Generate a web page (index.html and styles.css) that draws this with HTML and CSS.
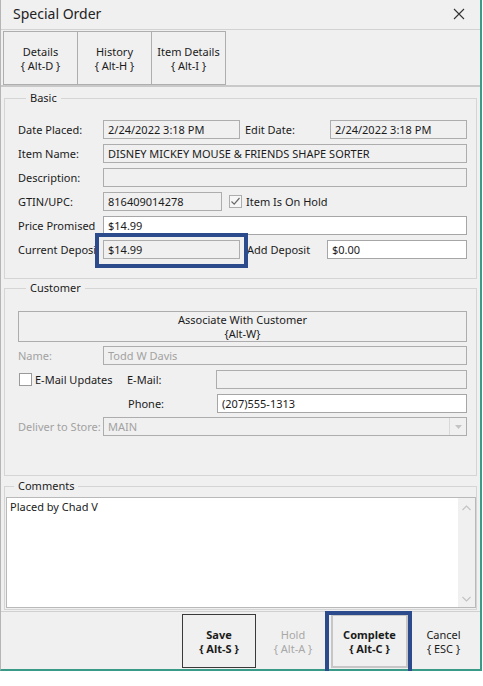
FILE: index.html
```html
<!DOCTYPE html>
<html>
<head>
<meta charset="utf-8">
<link rel="stylesheet" href="styles.css">
</head>
<body>
<div class="window">
  <div class="titlebar">
    <span class="title">Special Order</span>
    <svg class="close" width="12" height="12" viewBox="0 0 12 12"><path d="M1 1 L11 11 M11 1 L1 11" stroke="#333" stroke-width="1.1" fill="none"/></svg>
  </div>
  <div class="toolbar">
    <div class="tab"><span>Details</span><span>{ Alt-D }</span></div>
    <div class="tab"><span>History</span><span>{ Alt-H }</span></div>
    <div class="tab"><span>Item Details</span><span>{ Alt-I }</span></div>
  </div>
  <div class="content">
    <fieldset class="group basic">
      <legend>Basic</legend>
      <div class="row">
        <span class="lbl">Date Placed:</span>
        <span class="field ro w137">2/24/2022 3:18 PM</span>
        <span class="lbl lbl2">Edit Date:</span>
        <span class="field ro grow">2/24/2022 3:18 PM</span>
      </div>
      <div class="row">
        <span class="lbl">Item Name:</span>
        <span class="field ro grow">DISNEY MICKEY MOUSE &amp; FRIENDS SHAPE SORTER</span>
      </div>
      <div class="row">
        <span class="lbl">Description:</span>
        <span class="field ro grow"></span>
      </div>
      <div class="row">
        <span class="lbl">GTIN/UPC:</span>
        <span class="field ro w119">816409014278</span>
        <span class="check checked"><svg width="11" height="11" viewBox="0 0 11 11"><path d="M1.5 5.5 L4.2 8.2 L9.5 2" stroke="#6a6a6a" stroke-width="1.2" fill="none"/></svg></span>
        <span class="checklbl">Item Is On Hold</span>
      </div>
      <div class="row">
        <span class="lbl">Price Promised</span>
        <span class="field edit grow">$14.99</span>
      </div>
      <div class="row">
        <span class="lbl">Current Deposi</span>
        <span class="field ro w137 hl-wrap">$14.99<span class="highlight hl-deposit"></span></span>
        <span class="lbl lbl3">Add Deposit</span>
        <span class="field edit grow">$0.00</span>
      </div>
    </fieldset>

    <fieldset class="group customer">
      <legend>Customer</legend>
      <div class="assoc"><span>Associate With Customer</span><span>{Alt-W}</span></div>
      <div class="row r-name">
        <span class="lbl dis">Name:</span>
        <span class="field ro grow dis">Todd W Davis</span>
      </div>
      <div class="row r-mail">
        <span class="check"></span>
        <span class="checklbl mailupd">E-Mail Updates</span>
        <span class="lbl lbl-mail">E-Mail:</span>
        <span class="field ro grow"></span>
      </div>
      <div class="row r-phone">
        <span class="lbl lbl-phone">Phone:</span>
        <span class="field edit grow">(207)555-1313</span>
      </div>
      <div class="row r-store">
        <span class="lbl dis">Deliver to Store:</span>
        <span class="field ro grow dis combo">MAIN<span class="drop"><svg width="7" height="4" viewBox="0 0 7 4"><path d="M0 0 L7 0 L3.5 4 Z" fill="#c4c4c4"/></svg></span></span>
      </div>
    </fieldset>

    <fieldset class="group comments">
      <legend>Comments</legend>
      <div class="memo">
        <div class="memo-text">Placed by Chad V</div>
        <div class="scroll">
          <svg width="9" height="6" viewBox="0 0 9 6"><path d="M0.5 5 L4.5 1 L8.5 5" stroke="#c2c2c2" stroke-width="1.1" fill="none"/></svg>
          <svg width="9" height="6" viewBox="0 0 9 6"><path d="M0.5 1 L4.5 5 L8.5 1" stroke="#c2c2c2" stroke-width="1.1" fill="none"/></svg>
        </div>
      </div>
    </fieldset>
  </div>
  <div class="footer">
    <div class="btn save"><b>Save</b><b>{ Alt-S }</b></div>
    <div class="btn hold"><span>Hold</span><span>{ Alt-A }</span></div>
    <div class="btn complete"><b>Complete</b><b>{ Alt-C }</b><span class="highlight hl-complete"></span></div>
    <div class="btn cancel"><span>Cancel</span><span>{ ESC }</span></div>
  </div>
</div>
</body>
</html>
```

FILE: styles.css
```css
* { box-sizing: border-box; }
html, body { margin: 0; padding: 0; background: #ffffff; }
body {
  font-family: "Noto Sans", "Open Sans", sans-serif;
  font-size: 11px;
  color: #1b1b1b;
}
.window {
  width: 482px;
  height: 671px;
  background: #f0f0f0;
  border-left: 1px solid #b5b5b5;
  border-right: 2px solid #3a9a88;
  border-bottom: 2px solid #3a9a88;
  display: flex;
  flex-direction: column;
}
.titlebar {
  height: 30px;
  border-bottom: 1px solid #d2d2d2;
  display: flex;
  align-items: center;
  justify-content: space-between;
  padding: 0 12px 2px 12px;
}
.title { font-size: 14px; color: #222; }
.close { margin-right: 3px; }
.toolbar {
  height: 57px;
  display: flex;
  padding: 1px 0 0 2px;
  border-bottom: 2px solid #c9c9c9;
}
.tab {
  width: 75px;
  height: 54px;
  border: 1px solid #aeaeae;
  margin-right: -1px;
  display: flex;
  flex-direction: column;
  align-items: center;
  justify-content: center;
  text-align: center;
  line-height: 14px;
  padding-top: 2px;
  color: #1b1b1b;
}
.content { padding: 4px 3px 0 3px; }
.group {
  margin: 0;
  border: 1px solid #d5d5d5;
  min-width: 0;
}
legend {
  margin-left: 8px;
  padding: 0 4px;
  line-height: 14px;
  color: #1b1b1b;
}
.basic { padding: 15px 9px 19px 13px; }
.row {
  display: flex;
  align-items: center;
  height: 19px;
  margin-top: 5px;
}
.basic .row:first-of-type { margin-top: 0; }
.lbl { width: 85px; flex: none; white-space: nowrap; overflow: hidden; }
.lbl2 { margin-left: 5px; }
.lbl3 { margin-left: 7px; width: 80px; }
.field {
  height: 19px;
  border: 1px solid #adadad;
  padding: 0 4px;
  line-height: 17px;
  white-space: nowrap;
}
.ro { background: #f0f0f0; }
.edit { background: #ffffff; border-color: #a6a6a6; }
.grow { flex: 1; }
.w137 { width: 137px; flex: none; }
.w119 { width: 119px; flex: none; }
.dis { color: #a2a2a2; }
.check {
  width: 13px;
  height: 13px;
  border: 1px solid #9a9a9a;
  background: #ffffff;
  flex: none;
  display: flex;
  align-items: center;
  justify-content: center;
}
.check.checked { margin-left: 7px; border-color: #adadad; background: #f6f6f6; }
.checklbl { margin-left: 4px; }
.hl-wrap { position: relative; }
.highlight {
  position: absolute;
  border: 4px solid #2c4b8c;
  pointer-events: none;
}
.hl-deposit { left: -9px; top: -8px; width: 153px; height: 35px; }
.customer { margin-top: 2px; padding: 16px 9px 39px 13px; }
.assoc {
  height: 31px;
  border: 1px solid #adadad;
  display: flex;
  flex-direction: column;
  align-items: center;
  justify-content: center;
  line-height: 14px;
  color: #1b1b1b;
}
.r-name { margin-top: 4px; }
.r-mail { margin-top: 5px; padding-left: 1px; }
.r-phone { margin-top: 5px; }
.r-store { margin-top: 4px; }
.mailupd { width: 92px; margin-left: 3px; }
.lbl-mail, .lbl-phone { width: 89px; }
.lbl-mail { margin-left: 0; }
.lbl-phone { margin-left: 110px; }
.combo { position: relative; display: flex; }
.combo .drop {
  margin-left: auto;
  margin-right: -4px;
  width: 17px;
  height: 17px;
  border-left: 1px solid #d9d9d9;
  display: flex;
  align-items: center;
  justify-content: center;
}
.comments { margin-top: 3px; padding: 4px 0 1px 1px; }
.memo {
  height: 111px;
  border: 1px solid #b9b9b9;
  background: #ffffff;
  display: flex;
}
.memo-text { flex: 1; padding: 1px 3px; }
.scroll {
  width: 17px;
  background: #f0f0f0;
  display: flex;
  flex-direction: column;
  justify-content: space-between;
  align-items: center;
  padding: 7px 0 5px 0;
}
.footer {
  margin-top: auto;
  height: 58px;
  border-top: 1px solid #d0d0d0;
  display: flex;
  justify-content: flex-end;
  padding: 2px 3px 0 0;
}
.btn {
  height: 54px;
  margin-left: 2px;
  display: flex;
  flex-direction: column;
  align-items: center;
  justify-content: center;
  text-align: center;
  line-height: 14px;
  padding-top: 2px;
  border: 1px solid transparent;
  position: relative;
}
.btn b { font-weight: 700; display: block; }
.save { width: 74px; border: 1px solid #3a3a3a; }
.hold { width: 70px; color: #a8a8a8; }
.complete { width: 77px; border: 2px solid #c6c6c6; margin-left: 3px; }
.cancel { width: 67px; color: #1b1b1b; }
.hl-complete { left: -8px; top: -5px; width: 87px; height: 68px; }
```
